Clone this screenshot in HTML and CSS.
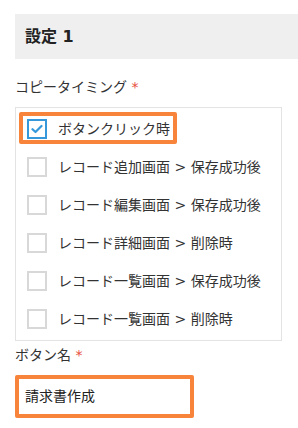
FILE: index.html
```html
<!DOCTYPE html>
<html lang="ja">
<head>
<meta charset="utf-8">
<link rel="stylesheet" href="styles.css">
</head>
<body>
<div class="page">
  <div class="section-title">設定 1</div>
  <div class="field-label">コピータイミング <span class="req">*</span></div>
  <div class="check-group">
    <div class="check-row highlighted">
      <span class="box checked">
        <svg width="12" height="10" viewBox="0 0 12 10"><path d="M1.5 5.2 L4.5 8 L10.5 2" fill="none" stroke="#3498db" stroke-width="2.2" stroke-linecap="round" stroke-linejoin="round"/></svg>
      </span>
      <span class="check-text">ボタンクリック時</span>
      <span class="mark"></span>
    </div>
    <div class="check-row"><span class="box"></span><span class="check-text">レコード追加画面 &gt; 保存成功後</span></div>
    <div class="check-row"><span class="box"></span><span class="check-text">レコード編集画面 &gt; 保存成功後</span></div>
    <div class="check-row"><span class="box"></span><span class="check-text">レコード詳細画面 &gt; 削除時</span></div>
    <div class="check-row"><span class="box"></span><span class="check-text">レコード一覧画面 &gt; 保存成功後</span></div>
    <div class="check-row"><span class="box"></span><span class="check-text">レコード一覧画面 &gt; 削除時</span></div>
  </div>
  <div class="field-label second">ボタン名 <span class="req">*</span></div>
  <div class="text-input">請求書作成</div>
</div>
</body>
</html>
```
FILE: styles.css
```css
html, body {
  margin: 0;
  padding: 0;
  background: #fff;
}
body {
  font-family: "DejaVu Sans", "Noto Sans CJK JP", sans-serif;
  color: #333;
  font-size: 14px;
}
.page {
  padding-left: 15px;
  padding-top: 14px;
}
.section-title {
  height: 45px;
  line-height: 45px;
  background: #efefef;
  padding-left: 10px;
  font-size: 16px;
  font-weight: bold;
  color: #222;
}
.field-label {
  margin-top: 18px;
  line-height: 20px;
  height: 20px;
  font-size: 14px;
  color: #333;
}
.field-label.second {
  margin-top: 4px;
}
.req {
  color: #e74c3c;
}
.check-group {
  margin-top: 10px;
  width: 265px;
  border: 1px solid #e3e3e3;
  padding: 2px 0;
}
.check-row {
  position: relative;
  height: 38px;
  display: flex;
  align-items: center;
  padding-left: 11px;
  gap: 11px;
}
.box {
  width: 16px;
  height: 16px;
  border: 2px solid #d8d8d8;
  display: flex;
  align-items: center;
  justify-content: center;
  flex: none;
}
.box.checked {
  border-color: #3498db;
}
.check-text {
  line-height: 20px;
  white-space: nowrap;
}
.mark {
  position: absolute;
  left: 3px;
  top: 2px;
  width: 150px;
  height: 24px;
  border: 4px solid #f7843a;
  border-radius: 2px;
}
.text-input {
  margin-top: 10px;
  width: 165px;
  height: 35px;
  line-height: 35px;
  border: 4px solid #f7843a;
  border-radius: 2px;
  padding-left: 6px;
  color: #222;
}
```
